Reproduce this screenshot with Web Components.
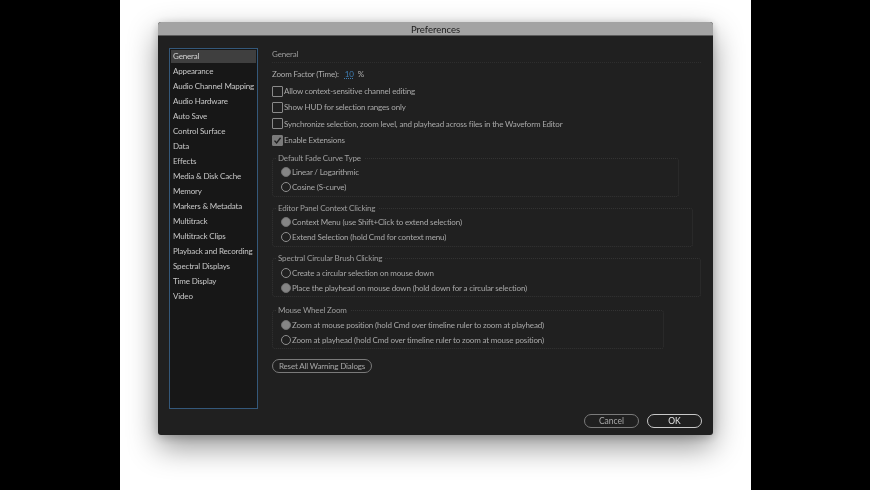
<!DOCTYPE html>
<html>
<head>
<meta charset="utf-8">
<title>Preferences</title>
<style>
    html, body { margin: 0; height: 100%; background: #000; }
    body { font-family: Lato, "Open Sans", sans-serif; overflow: hidden; }
</style>
</head>
<body>
<pref-stage>
    <pref-dialog heading="Preferences">
        <pref-sidebar slot="side">
            <pref-item selected>General</pref-item>
            <pref-item>Appearance</pref-item>
            <pref-item>Audio Channel Mapping</pref-item>
            <pref-item>Audio Hardware</pref-item>
            <pref-item>Auto Save</pref-item>
            <pref-item>Control Surface</pref-item>
            <pref-item>Data</pref-item>
            <pref-item>Effects</pref-item>
            <pref-item>Media &amp; Disk Cache</pref-item>
            <pref-item>Memory</pref-item>
            <pref-item>Markers &amp; Metadata</pref-item>
            <pref-item>Multitrack</pref-item>
            <pref-item>Multitrack Clips</pref-item>
            <pref-item>Playback and Recording</pref-item>
            <pref-item>Spectral Displays</pref-item>
            <pref-item>Time Display</pref-item>
            <pref-item>Video</pref-item>
        </pref-sidebar>

        <pref-general>
            <pref-check>Allow context-sensitive channel editing</pref-check>
            <pref-check>Show HUD for selection ranges only</pref-check>
            <pref-check>Synchronize selection, zoom level, and playhead across files in the Waveform Editor</pref-check>
            <pref-check checked>Enable Extensions</pref-check>

            <pref-group slot="groups" legend="Default Fade Curve Type" width="407">
                <pref-radio checked>Linear / Logarithmic</pref-radio>
                <pref-radio>Cosine (S-curve)</pref-radio>
            </pref-group>
            <pref-group slot="groups" legend="Editor Panel Context Clicking" width="421">
                <pref-radio checked>Context Menu (use Shift+Click to extend selection)</pref-radio>
                <pref-radio>Extend Selection (hold Cmd for context menu)</pref-radio>
            </pref-group>
            <pref-group slot="groups" legend="Spectral Circular Brush Clicking" width="429" style="margin-bottom:8px;--rows-top:2.5px">
                <pref-radio>Create a circular selection on mouse down</pref-radio>
                <pref-radio checked>Place the playhead on mouse down (hold down for a circular selection)</pref-radio>
            </pref-group>
            <pref-group slot="groups" legend="Mouse Wheel Zoom" width="392" style="margin-bottom:0;--rows-top:2.5px">
                <pref-radio checked>Zoom at mouse position (hold Cmd over timeline ruler to zoom at playhead)</pref-radio>
                <pref-radio>Zoom at playhead (hold Cmd over timeline ruler to zoom at mouse position)</pref-radio>
            </pref-group>

            <pref-button slot="reset" width="100">Reset All Warning Dialogs</pref-button>
        </pref-general>

        <pref-button slot="actions" width="55">Cancel</pref-button>
        <pref-button slot="actions" width="55" primary>OK</pref-button>
    </pref-dialog>
</pref-stage>

<script>
// Small helper so every component is declared the same way
function component(tag, markup) {
    const template = document.createElement('template');
    template.innerHTML = markup;
    customElements.define(tag, class extends HTMLElement {
        constructor() {
            super();
            this.attachShadow({ mode: 'open' });
            this.shadowRoot.appendChild(template.content.cloneNode(true));
        }
        connectedCallback() {
            this.shadowRoot.querySelectorAll('[data-text]').forEach(el => {
                el.textContent = this.getAttribute(el.dataset.text) || '';
            });
            const width = this.getAttribute('width');
            if (width) this.style.width = width + 'px';
        }
    });
}

component('pref-stage', `
    <style>
        :host {
            display: block;
            width: 631px;
            height: 490px;
            margin-left: 120px;
            padding: 22px 0 0 38px;
            box-sizing: border-box;
            background: #fff;
            overflow: hidden;
        }
    </style>
    <slot></slot>`);

component('pref-dialog', `
    <style>
        :host {
            display: block;
            width: 555px;
            height: 413px;
            background: #202020;
            border-radius: 3px;
            box-shadow: 0 12px 30px rgba(0,0,0,.42), 0 2px 10px rgba(0,0,0,.22);
            color: #a9a9a9;
            font-size: 8.5px;
            filter: blur(.3px);
        }
        .title {
            height: 14px;
            line-height: 15px;
            text-align: center;
            font-size: 9.5px;
            color: #1c1c1c;
            background: #a3a3a3;
            border-radius: 3px 3px 0 0;
            border-bottom: 1px solid #5c5c5c;
            box-sizing: border-box;
        }
        .body {
            display: flex;
            height: 367px;
            padding: 12px 0 0 11px;
            box-sizing: border-box;
            font-size: 8px;
            letter-spacing: -.16px;
        }
        .actions {
            display: flex;
            justify-content: flex-end;
            gap: 8px;
            padding: 11px 11px 0 0;
        }
    </style>
    <div class="title" data-text="heading"></div>
    <div class="body">
        <slot name="side"></slot>
        <slot></slot>
    </div>
    <div class="actions"><slot name="actions"></slot></div>`);

component('pref-sidebar', `
    <style>
        :host {
            display: block;
            flex: none;
            width: 89px;
            height: 361px;
            padding: 1px;
            box-sizing: border-box;
            background: #171717;
            border: 1px solid #34587a;
        }
    </style>
    <slot></slot>`);

component('pref-item', `
    <style>
        :host {
            display: block;
            height: 15px;
            line-height: 12px;
            padding-left: 2px;
            color: #c8c8c8;
            white-space: nowrap;
        }
        :host([selected]) {
            height: 13px;
            margin-bottom: 2px;
            background: #3f3f3f;
            color: #d4d4d4;
        }
    </style>
    <slot></slot>`);

component('pref-general', `
    <style>
        :host {
            display: block;
            flex: 1;
            margin-left: 14px;
            margin-right: 12px;
        }
        .head {
            height: 14px;
            line-height: 12px;
            color: #9c9c9c;
            border-bottom: 1px dotted #2e2e2e;
        }
        .zoom {
            display: flex;
            gap: 4px;
            height: 12px;
            line-height: 12px;
            margin: 5px 0 3px;
            color: #b0b0b0;
            white-space: nowrap;
        }
        .value { color: #3f7fb5; margin-left: 2px; text-decoration: underline dotted #3f7fb5; }
        .checks { display: block; }
        .groups { display: block; margin-top: 4.7px; }
        .reset { margin-top: 10px; display: block; }
    </style>
    <div class="head">General</div>
    <div class="zoom"><span>Zoom Factor (Time):</span><span class="value">10</span><span>%</span></div>
    <div class="checks"><slot></slot></div>
    <div class="groups"><slot name="groups"></slot></div>
    <div class="reset"><slot name="reset"></slot></div>`);

component('pref-check', `
    <style>
        :host {
            display: flex;
            align-items: center;
            gap: 1px;
            height: 16.33px;
            white-space: nowrap;
        }
        .box {
            flex: none;
            width: 9px;
            height: 9px;
            border: 1px solid #8a8a8a;
            border-radius: 1px;
            display: flex;
        }
        svg { display: none; width: 9px; height: 9px; }
        :host([checked]) .box { background: #7a7a7a; border-color: #7a7a7a; }
        :host([checked]) svg { display: block; }
    </style>
    <span class="box"><svg viewBox="0 0 9 9"><path d="M1.5 4.6 3.6 7 7.6 1.8" fill="none" stroke="#1f1f1f" stroke-width="1.4"/></svg></span>
    <span><slot></slot></span>`);

component('pref-group', `
    <style>
        :host { display: block; height: 44px; margin-bottom: 6px; }
        fieldset {
            margin: 0;
            height: 100%;
            padding: 0 0 0 8px;
            box-sizing: border-box;
            border: 1px dotted #333;
            border-radius: 3px;
        }
        legend {
            margin-left: -5px;
            padding: 0 3px 0 2px;
            line-height: 10px;
            color: #9f9f9f;
            white-space: nowrap;
        }
        .rows { padding-top: var(--rows-top, 1.5px); }
    </style>
    <fieldset>
        <legend data-text="legend"></legend>
        <div class="rows"><slot></slot></div>
    </fieldset>`);

component('pref-radio', `
    <style>
        :host {
            display: flex;
            align-items: center;
            height: 15px;
            white-space: nowrap;
        }
        .dot {
            flex: none;
            width: 8px;
            height: 8px;
            margin-right: 1px;
            border: 1px solid #8f8f8f;
            border-radius: 50%;
        }
        :host([checked]) .dot { background: #858585; border-color: #6f6f6f; }
    </style>
    <span class="dot"></span>
    <span><slot></slot></span>`);

component('pref-button', `
    <style>
        :host {
            display: block;
            height: 14px;
            line-height: 12px;
            text-align: center;
            box-sizing: border-box;
            color: #a8a8a8;
            border: 1px solid #7a7a7a;
            border-radius: 7px;
            white-space: nowrap;
        }
        :host([primary]) { color: #e2e2e2; border-color: #c8c8c8; }
    </style>
    <slot></slot>`);
</script>
</body>
</html>
